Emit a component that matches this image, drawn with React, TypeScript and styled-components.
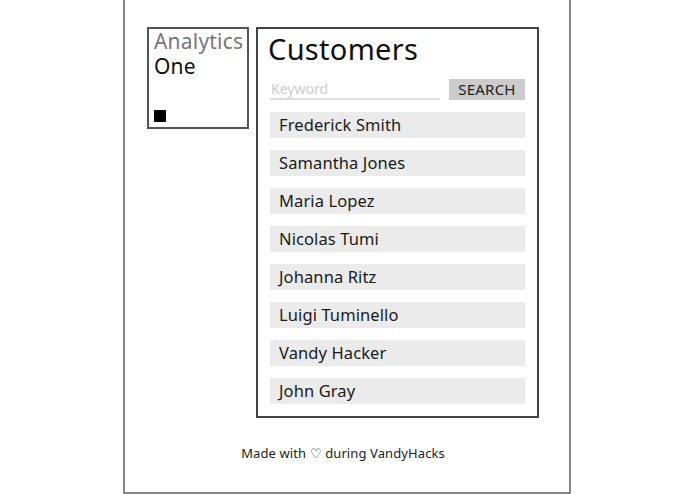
import React from "react";
import styled, { createGlobalStyle } from "styled-components";

const Global = createGlobalStyle`
  * { box-sizing: border-box; }
  html, body { margin: 0; padding: 0; background: #fff; }
  body { font-family: "Noto Sans", "Open Sans", sans-serif; color: #111; }
`;

const Frame = styled.div`
  width: 448px;
  height: 494px;
  margin: 0 0 0 123px;
  border: 2px solid #858585;
  border-top: none;
  padding: 27px 0 0 22px;
  display: flex;
  flex-direction: column;
`;

const Row = styled.div`
  display: flex;
  align-items: flex-start;
  gap: 7px;
`;

const Sidebar = styled.div`
  width: 102px;
  height: 102px;
  border: 2px solid #555;
  padding: 0 5px 5px 5px;
  display: flex;
  flex-direction: column;
`;

const Brand = styled.div<{ $muted?: boolean }>`
  font-size: 21px;
  line-height: 25px;
  letter-spacing: 0.2px;
  color: ${(p) => (p.$muted ? "#777" : "#111")};
`;

const Square = styled.div`
  width: 12px;
  height: 12px;
  background: #000;
  margin-top: auto;
`;

const Main = styled.div`
  width: 283px;
  height: 391px;
  border: 2px solid #444;
  padding: 0 12px;
`;

const Title = styled.h1`
  margin: 0 0 0 -2px;
  font-size: 29px;
  font-weight: 400;
  line-height: 39px;
  letter-spacing: 0.3px;
  color: #111;
`;

const SearchRow = styled.div`
  display: flex;
  align-items: flex-end;
  justify-content: space-between;
  margin-top: 11px;
  height: 21px;
`;

const Input = styled.input`
  width: 170px;
  height: 21px;
  border: none;
  border-bottom: 2px solid #ddd;
  padding: 0 1px;
  font-family: inherit;
  font-size: 14px;
  color: #111;
  outline: none;
  background: transparent;
  &::placeholder { color: #ccc; }
`;

const Button = styled.button`
  width: 76px;
  height: 21px;
  border: none;
  background: #cccccc;
  font-family: inherit;
  font-size: 15px;
  line-height: 21px;
  letter-spacing: 0.2px;
  color: #222;
  padding: 0;
`;

const List = styled.div`
  margin-top: 12px;
  display: flex;
  flex-direction: column;
  gap: 12px;
`;

const Item = styled.div`
  height: 26px;
  background: #ebebeb;
  padding-left: 9px;
  font-size: 16.5px;
  line-height: 26px;
  letter-spacing: 0.1px;
  color: #1a1a1a;
`;

const Footer = styled.div`
  margin-top: 26px;
  margin-left: -22px;
  text-align: center;
  font-size: 13px;
  letter-spacing: 0.1px;
  color: #222;
  padding-right: 8px;
`;

const customers = [
  "Frederick Smith",
  "Samantha Jones",
  "Maria Lopez",
  "Nicolas Tumi",
  "Johanna Ritz",
  "Luigi Tuminello",
  "Vandy Hacker",
  "John Gray",
];

export default function App() {
  return (
    <>
      <Global />
      <Frame>
        <Row>
          <Sidebar>
            <Brand $muted>Analytics</Brand>
            <Brand>One</Brand>
            <Square />
          </Sidebar>
          <Main>
            <Title>Customers</Title>
            <SearchRow>
              <Input placeholder="Keyword" />
              <Button>SEARCH</Button>
            </SearchRow>
            <List>
              {customers.map((c) => (
                <Item key={c}>{c}</Item>
              ))}
            </List>
          </Main>
        </Row>
        <Footer>Made with ♡ during VandyHacks</Footer>
      </Frame>
    </>
  );
}
